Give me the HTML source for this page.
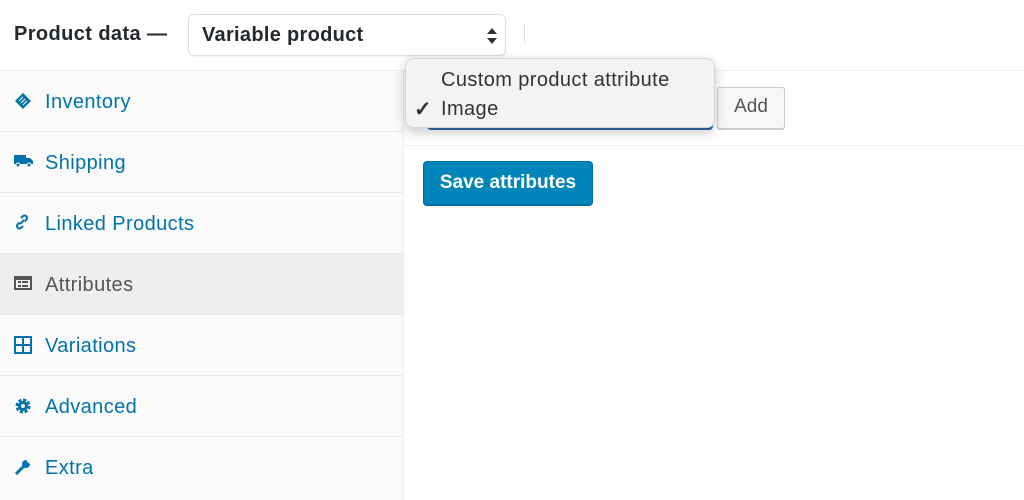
<!DOCTYPE html>
<html><head><meta charset="utf-8"><style>
*{margin:0;padding:0;box-sizing:border-box}
body{width:1024px;height:500px;background:#fff;font-family:"Liberation Sans",Arial,sans-serif;position:relative;overflow:hidden;color:#23282d}
.a{position:absolute}
.hdr{left:14px;top:23px;font-size:20px;font-weight:bold;color:#23282d;letter-spacing:0.4px}
.sel{left:188px;top:14px;width:318px;height:42px;border:1px solid #ddd;border-radius:6px;background:#fff;font-size:20px;font-weight:bold;padding:9px 13px;box-shadow:0 1px 1px rgba(0,0,0,.05);letter-spacing:0.3px}
.side{left:0;top:70px;width:404px;height:430px;background:#fafafa;border-right:1px solid #eee;border-top:1px solid #eee}
.it{position:absolute;left:0;width:403px;height:61px;border-bottom:1px solid #e9e9e9;font-size:20px;color:#0073aa;padding:20px 0 0 45px;letter-spacing:0.4px}
.it svg{position:absolute;left:14px;top:21px}
.act{background:#eee;color:#555}
</style></head><body>
<div class="a hdr">Product data —</div>
<div class="a sel">Variable product
<svg class="a" style="left:297px;top:11px" width="12" height="20" viewBox="0 0 12 20"><path d="M6 2L11 8H1Z M6 18L11 12H1Z" fill="#333"/></svg></div>
<div class="a" style="left:524px;top:25px;width:1px;height:18px;background:#ddd"></div>
<div class="a" style="left:404px;top:70px;width:620px;height:1px;background:#eee"></div>
<div class="a side">
<div class="it" style="top:0"><svg width="18" height="18" viewBox="0 0 18 18"><path d="M1 9L9 1l8 8-8 8z" fill="#0073aa"/><path d="M5 9l4-4M7 11l4-4M9 13l4-4" stroke="#fff" stroke-width="1"/></svg>Inventory</div>
<div class="it" style="top:61px"><svg width="20" height="16" viewBox="0 0 20 16"><rect x="0" y="2" width="12" height="9" fill="#0073aa"/><path d="M12 5h4l3 3v3h-7z" fill="#0073aa"/><circle cx="4" cy="12" r="2" fill="#0073aa" stroke="#fff"/><circle cx="15" cy="12" r="2" fill="#0073aa" stroke="#fff"/></svg>Shipping</div>
<div class="it" style="top:122px"><svg width="16" height="16" viewBox="0 0 16 16"><path d="M7 4l2-2a2.5 2.5 0 013.5 3.5l-2 2M9 12l-2 2a2.5 2.5 0 01-3.5-3.5l2-2M6 10l4-4" stroke="#0073aa" stroke-width="2" fill="none"/></svg>Linked Products</div>
<div class="it act" style="top:183px"><svg width="18" height="16" viewBox="0 0 18 16"><rect x="0" y="1" width="18" height="14" fill="#555"/><rect x="2" y="5" width="14" height="8" fill="#eee"/><rect x="4" y="6" width="3" height="2" fill="#555"/><rect x="4" y="10" width="3" height="2" fill="#555"/><rect x="8" y="6" width="6" height="2" fill="#555"/><rect x="8" y="10" width="6" height="2" fill="#555"/></svg>Attributes</div>
<div class="it" style="top:244px"><svg width="18" height="18" viewBox="0 0 18 18"><path d="M1 1h16v16H1zM9 1v16M1 9h16" stroke="#0073aa" stroke-width="2" fill="none"/></svg>Variations</div>
<div class="it" style="top:305px"><svg width="18" height="18" viewBox="0 0 18 18"><circle cx="9" cy="9" r="6" fill="none" stroke="#0073aa" stroke-width="3" stroke-dasharray="3 1.7"/><circle cx="9" cy="9" r="5" fill="#0073aa"/><circle cx="9" cy="9" r="2" fill="#fafafa"/></svg>Advanced</div>
<div class="it" style="top:366px;border-bottom:none"><svg width="18" height="18" viewBox="0 0 18 18"><path d="M2 16l8-8" stroke="#0073aa" stroke-width="3"/><circle cx="12" cy="6" r="4" fill="#0073aa"/><path d="M13 2l3 3" stroke="#fafafa" stroke-width="2"/></svg>Extra</div>
</div>
<div class="a" style="left:427px;top:90px;width:286px;height:40px;border-radius:4px;background:#2e6da4"></div>
<div class="a" style="left:717px;top:87px;width:68px;height:42px;border:1px solid #ccc;border-radius:3px;background:#f7f7f7;box-shadow:0 1px 0 #ccc;font-size:19px;color:#555;text-align:center;line-height:38px">Add</div>
<div class="a" style="left:405px;top:145px;width:619px;height:1px;background:#eee"></div>
<div class="a" style="left:405px;top:58px;width:310px;height:70px;background:#f3f3f3;border:1px solid #d6d6d6;border-radius:8px;box-shadow:0 4px 12px rgba(0,0,0,.22);font-size:20px;color:#333;letter-spacing:0.4px">
<div class="a" style="left:35px;top:10px">Custom product attribute</div>
<div class="a" style="left:8px;top:38px;font-weight:bold;font-size:21px">✓</div>
<div class="a" style="left:35px;top:39px">Image</div>
</div>
<div class="a" style="left:423px;top:161px;width:170px;height:44px;background:#0085ba;border:1px solid #0073aa;border-radius:4px;box-shadow:0 1px 0 #006799;color:#fff;font-size:19px;font-weight:bold;text-align:center;line-height:41px">Save attributes</div>
</body></html>
